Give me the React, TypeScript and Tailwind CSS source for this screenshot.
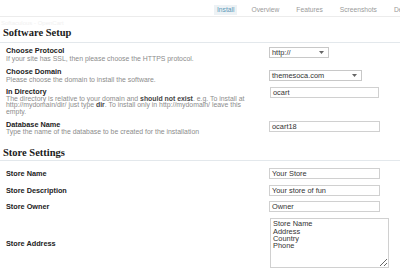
import React from 'react';

const sans = "font-['Liberation_Sans',Arial,sans-serif]";
const serif = "font-['Liberation_Serif','Times_New_Roman',serif]";

function Caret() {
  return (
    <svg width="5" height="3" viewBox="0 0 5 3" className="shrink-0">
      <path d="M0 0 L5 0 L2.5 3 Z" fill="#666" />
    </svg>
  );
}

function Select({ value, className }: { value: string; className: string }) {
  return (
    <div
      className={`h-[11px] border border-[#c8c8c8] bg-white flex items-center justify-between pl-[2px] pr-[4px] text-[7.4px] leading-[9px] text-[#333] ${className}`}
    >
      <span>{value}</span>
      <Caret />
    </div>
  );
}

function TextBox({ value, className }: { value: string; className: string }) {
  return (
    <div
      className={`h-[11px] border border-[#d0d0d0] bg-white flex items-center pl-[2px] text-[7.4px] leading-[9px] text-[#333] ${className}`}
    >
      {value}
    </div>
  );
}

function Label({ children }: { children: React.ReactNode }) {
  return <div className="text-[7.3px] leading-[7px] font-bold text-[#222] whitespace-nowrap">{children}</div>;
}

function Desc({ children, className = '' }: { children: React.ReactNode; className?: string }) {
  return <div className={`text-[6.9px] text-[#8c8c8c] whitespace-nowrap ${className}`}>{children}</div>;
}

export default function App() {
  const tabs = ['Install', 'Overview', 'Features', 'Screenshots', 'De'];

  return (
    <div className={`w-[400px] h-[272px] overflow-hidden bg-white ${sans}`}>
      {/* tab bar */}
      <div className="h-[17px] border-b border-[#ececec] flex pl-[214px] pt-[5px] gap-[11px] overflow-hidden">
        {tabs.map((t) => (
          <div
            key={t}
            className={`h-[10px] leading-[10px] px-[3px] text-[6.7px] whitespace-nowrap ${
              t === 'Install' ? 'bg-[#edf2f5] text-[#5b97b8]' : 'text-[#9a9a9a]'
            }`}
          >
            {t}
          </div>
        ))}
      </div>

      <div className="h-[10px] pt-[3px] pl-[1px] text-[6px] leading-[7px] text-[#f1f1f1] whitespace-nowrap">
        Softaculous - OpenCart
      </div>

      {/* Software Setup */}
      <div className={`${serif} font-bold text-[10.5px] leading-[11px] text-[#1a1a1a] pl-[3px] pb-[4px] border-b border-[#e3e8ec]`}>
        Software Setup
      </div>

      <div className="flex items-start mt-[4px]">
        <div className="w-[269px] pl-[6px]">
          <Label>Choose Protocol</Label>
          <Desc className="leading-[7px] mt-[1px]">If your site has SSL, then please choose the HTTPS protocol.</Desc>
        </div>
        <Select value="http://" className="w-[60px]" />
      </div>

      <div className="flex items-start mt-[6px]">
        <div className="w-[269px] pl-[6px]">
          <Label>Choose Domain</Label>
          <Desc className="leading-[7px] mt-[1px]">Please choose the domain to install the software.</Desc>
        </div>
        <Select value="themesoca.com" className="w-[93px] mt-[2px]" />
      </div>

      <div className="flex items-start mt-[5px]">
        <div className="w-[269px] pl-[6px]">
          <Label>In Directory</Label>
          <Desc className="leading-[6.4px] mt-[1px]">
            The directory is relative to your domain and <b className="text-[#444]">should not exist</b>. e.g. To install at
            <br />
            http://mydomain/dir/ just type <b className="text-[#444]">dir</b>. To install only in http://mydomain/ leave this
            <br />
            empty.
          </Desc>
        </div>
        <TextBox value="ocart" className="w-[109px] -mt-px ml-px" />
      </div>

      <div className="flex items-start mt-[6px]">
        <div className="w-[269px] pl-[6px]">
          <Label>Database Name</Label>
          <Desc className="leading-[7px]">Type the name of the database to be created for the installation</Desc>
        </div>
        <TextBox value="ocart18" className="w-[111px]" />
      </div>

      {/* Store Settings */}
      <div className={`${serif} font-bold text-[10.5px] leading-[11px] text-[#1a1a1a] pl-[3px] pb-[2px] mt-[12px] border-b border-[#e3e8ec]`}>
        Store Settings
      </div>

      <div className="flex items-center mt-[7px]">
        <div className="w-[269px] pl-[6px]">
          <Label>Store Name</Label>
        </div>
        <TextBox value="Your Store" className="w-[111px]" />
      </div>

      <div className="flex items-center mt-[6px]">
        <div className="w-[269px] pl-[6px]">
          <Label>Store Description</Label>
        </div>
        <TextBox value="Your store of fun" className="w-[111px]" />
      </div>

      <div className="flex items-center mt-[5px]">
        <div className="w-[269px] pl-[6px]">
          <Label>Store Owner</Label>
        </div>
        <TextBox value="Owner" className="w-[111px]" />
      </div>

      <div className="flex items-center mt-[6px]">
        <div className="w-[269px] pl-[6px]">
          <Label>Store Address</Label>
        </div>
        <textarea
          readOnly
          defaultValue={'Store Name\nAddress\nCountry\nPhone'}
          className="w-[119px] h-[50px] ml-px border border-[#d0d0d0] bg-white px-[2px] pt-[1px] text-[7.4px] leading-[7.3px] text-[#333] outline-none"
        />
      </div>
    </div>
  );
}
